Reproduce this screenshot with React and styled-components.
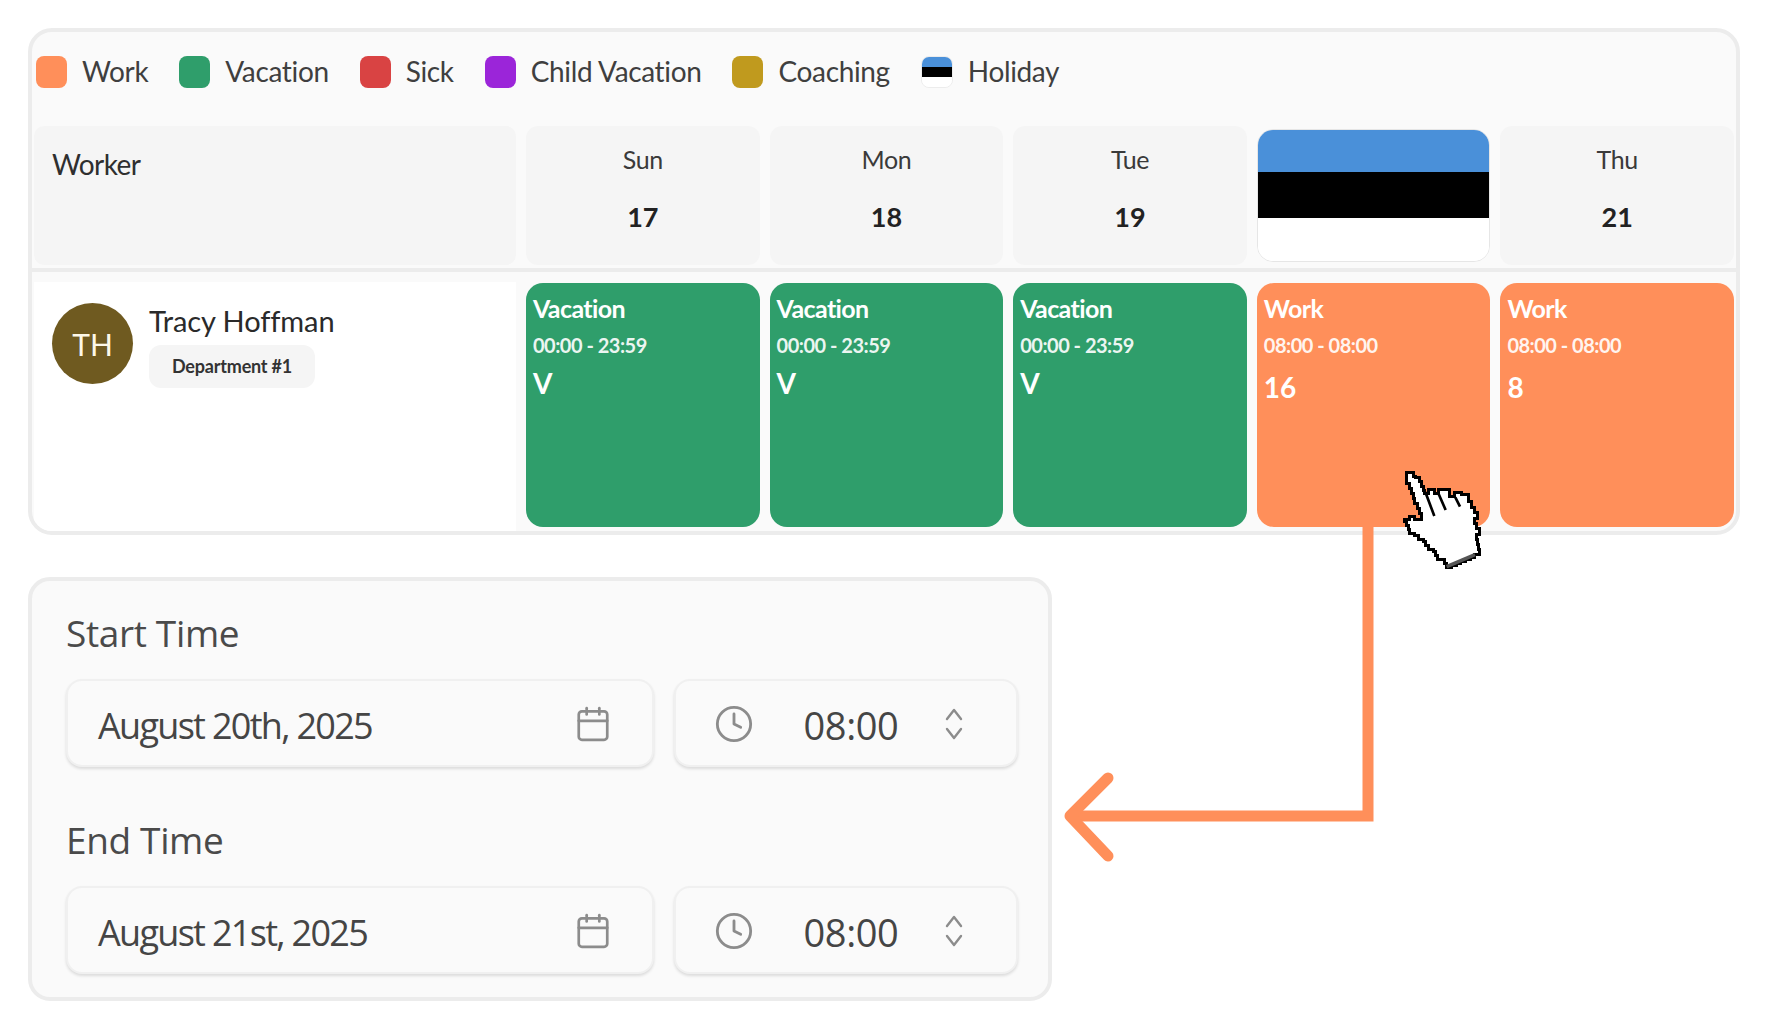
import React from "react";
import styled, { createGlobalStyle } from "styled-components";
import { Calendar, Clock } from "lucide-react";

const GlobalStyle = createGlobalStyle`
  html, body {
    margin: 0;
    padding: 0;
    background: #fff;
  }
  * {
    box-sizing: border-box;
  }
`;

const Page = styled.div`
  position: relative;
  width: 1768px;
  height: 1028px;
  padding: 28px 28px 0 28px;
  overflow: hidden;
  font-family: Lato, "Liberation Sans", sans-serif;
  color: #2f2f2f;
`;

const ScheduleCard = styled.section`
  width: 1712px;
  height: 507px;
  border: 4px solid #ececec;
  border-radius: 24px;
  background: #fafafa;
  overflow: hidden;
`;

const Legend = styled.div`
  display: flex;
  align-items: center;
  height: 32px;
  margin: 24px 0 38px 4px;
`;

const LegendItem = styled.div`
  display: flex;
  align-items: center;
  gap: 15px;
  margin-right: 31px;
  font-size: 28px;
  line-height: 30px;
  letter-spacing: -0.35px;
  color: #3f3f3f;
`;

const LegendLabel = styled.span`
  margin-top: -2px;
`;

const Swatch = styled.span`
  display: block;
  width: 31px;
  height: 32px;
  border-radius: 8px;
  background: ${(p) => p.$color};
`;

const FlagSwatch = styled.span`
  display: flex;
  flex-direction: column;
  width: 32px;
  height: 32px;
  border-radius: 8px;
  border: 1px solid #ececec;
  overflow: hidden;
`;

const Stripe = styled.span`
  display: block;
  flex: ${(p) => p.$flex || 1};
  background: ${(p) => p.$color};
`;

const HeaderGrid = styled.div`
  display: grid;
  grid-template-columns: 482px repeat(5, 1fr);
  column-gap: 10px;
  height: 139px;
  margin: 0 2px;
`;

const WorkerHead = styled.div`
  background: #f5f5f5;
  border-radius: 10px;
  padding: 19px 18px;
  font-size: 28px;
  letter-spacing: -0.6px;
  line-height: 38px;
`;

const DayHead = styled.div`
  display: flex;
  flex-direction: column;
  align-items: center;
  background: #f5f5f5;
  border-radius: 12px;
  padding-top: 16px;
`;

const DayName = styled.div`
  font-size: 25px;
  letter-spacing: -0.4px;
  line-height: 34px;
  color: #3a3a3a;
`;

const DayNumber = styled.div`
  margin-top: 24px;
  font-size: 27px;
  font-weight: 700;
  line-height: 34px;
  color: #222;
`;

const HolidayFlag = styled.div`
  display: flex;
  flex-direction: column;
  margin: 3px 0;
  border: 1px solid #e6e6e6;
  border-radius: 16px;
  overflow: hidden;
  background: #fff;
`;

const Divider = styled.div`
  height: 4px;
  margin-top: 3px;
  background: #ececec;
`;

const WorkerRow = styled.div`
  display: grid;
  grid-template-columns: 482px repeat(5, 1fr);
  column-gap: 10px;
  height: 259px;
  padding: 11px 2px 4px;
`;

const WorkerCell = styled.div`
  display: flex;
  align-items: flex-start;
  gap: 16px;
  margin-top: -1px;
  margin-bottom: -4px;
  padding: 21px 18px;
  background: #fff;
`;

const Avatar = styled.div`
  display: flex;
  align-items: center;
  justify-content: center;
  width: 81px;
  height: 81px;
  border-radius: 50%;
  background: #6f5a20;
  color: #fdf8e8;
  font-size: 30px;
`;

const WorkerInfo = styled.div`
  display: flex;
  flex-direction: column;
  align-items: flex-start;
`;

const WorkerName = styled.div`
  font-size: 29px;
  letter-spacing: -0.1px;
  line-height: 36px;
  color: #2a2a2a;
`;

const DeptBadge = styled.div`
  margin-top: 6px;
  padding: 0 23px;
  height: 43px;
  line-height: 43px;
  border-radius: 12px;
  background: #f5f5f5;
  font-size: 18px;
  font-weight: 700;
  letter-spacing: -0.2px;
  color: #333;
`;

const Shift = styled.div`
  padding: 9px 7px;
  border-radius: 17px;
  background: ${(p) => p.$color};
  color: #fff;
`;

const ShiftTitle = styled.div`
  font-size: 25px;
  font-weight: 700;
  letter-spacing: -0.6px;
  line-height: 32px;
`;

const ShiftTime = styled.div`
  margin-top: 8px;
  font-size: 20px;
  font-weight: 700;
  letter-spacing: -0.5px;
  line-height: 26px;
  color: rgba(255, 255, 255, 0.92);
`;

const ShiftValue = styled.div`
  margin-top: ${(p) => (p.$hours ? 10 : 6)}px;
  font-size: 28px;
  font-weight: 700;
  line-height: 38px;
`;

const FormCard = styled.section`
  width: 1024px;
  height: 424px;
  margin-top: 42px;
  padding: 30px 0 0 34px;
  border: 4px solid #ececec;
  border-radius: 22px;
  background: #fafafa;
  font-family: "Open Sans", "Noto Sans", sans-serif;
`;

const FieldLabel = styled.div`
  height: 44px;
  margin-top: ${(p) => (p.$second ? 51 : 0)}px;
  font-size: 37px;
  letter-spacing: -0.35px;
  line-height: 44px;
  color: #4a4a4a;
`;

const FieldRow = styled.div`
  display: grid;
  grid-template-columns: 588px 344px;
  column-gap: 20px;
  margin-top: 24px;
`;

const InputBox = styled.div`
  display: flex;
  align-items: center;
  justify-content: space-between;
  height: 88px;
  border: 2px solid #f0f0f0;
  border-radius: 16px;
  background: #fafafa;
  box-shadow: 0 2px 3px rgba(0, 0, 0, 0.12);
  padding: ${(p) => p.$padding};
  color: #454545;
  svg {
    color: #8c8c8c;
    flex-shrink: 0;
    margin-top: 2px;
  }
`;

const DateValue = styled.span`
  padding-top: 4px;
  font-size: 36px;
  letter-spacing: -1.7px;
`;

const TimeValue = styled.span`
  margin-left: 6px;
  padding-top: 4px;
  font-size: 38px;
  letter-spacing: -0.4px;
`;

const Overlay = styled.svg`
  position: absolute;
  left: 0;
  top: 0;
  pointer-events: none;
`;

const legendItems = [
  { label: "Work", color: "#ff8f5a" },
  { label: "Vacation", color: "#2f9e6b" },
  { label: "Sick", color: "#d94343" },
  { label: "Child Vacation", color: "#9b25d9" },
  { label: "Coaching", color: "#c09a1e" },
];

const days = [
  { name: "Sun", num: 17 },
  { name: "Mon", num: 18 },
  { name: "Tue", num: 19 },
  { holiday: true },
  { name: "Thu", num: 21 },
];

const shifts = [
  { title: "Vacation", time: "00:00 - 23:59", value: "V", color: "#2f9e6b" },
  { title: "Vacation", time: "00:00 - 23:59", value: "V", color: "#2f9e6b" },
  { title: "Vacation", time: "00:00 - 23:59", value: "V", color: "#2f9e6b" },
  { title: "Work", time: "08:00 - 08:00", value: "16", color: "#ff8f5a", hours: true },
  { title: "Work", time: "08:00 - 08:00", value: "8", color: "#ff8f5a", hours: true },
];

const Flag = ({ as: Wrapper }) => (
  <Wrapper>
    <Stripe $color="#4a90d9" $flex={43} />
    <Stripe $color="#000" $flex={46} />
    <Stripe $color="#fff" $flex={44} />
  </Wrapper>
);

const UpDown = () => (
  <svg width="24" height="36" viewBox="0 0 24 36" fill="none" stroke="currentColor" strokeWidth="2.4" strokeLinecap="round" strokeLinejoin="round">
    <path d="M5 13L12 4L19 13" />
    <path d="M5 23L12 32L19 23" />
  </svg>
);

const DateTimeRow = ({ date }) => (
  <FieldRow>
    <InputBox $padding="0 40px 0 30px">
      <DateValue>{date}</DateValue>
      <Calendar size={38} strokeWidth={1.7} />
    </InputBox>
    <InputBox $padding="0 50px 0 38px">
      <Clock size={40} strokeWidth={1.7} />
      <TimeValue>08:00</TimeValue>
      <UpDown />
    </InputBox>
  </FieldRow>
);

// hand pointer outline, traced from a 3x crop; each edge is cut in little steps
const handPoints = [
  [80, 48], [100, 38], [108, 50], [118, 52], [135, 92], [145, 100], [165, 88], [175, 100],
  [195, 88], [210, 90], [225, 110], [245, 98], [265, 105], [275, 125], [292, 158], [283, 175],
  [298, 205], [290, 225], [298, 270], [285, 285], [200, 322], [185, 300], [172, 298], [160, 275],
  [145, 270], [130, 245], [115, 240], [105, 228], [90, 220], [75, 185], [105, 170], [125, 178],
  [105, 130], [90, 85], [80, 70],
];

const stairs = (points, size) => {
  let d = `M${points[0][0]} ${points[0][1]}`;
  points.forEach((point, i) => {
    const [x0, y0] = point;
    const [x1, y1] = points[(i + 1) % points.length];
    const steps = Math.max(1, Math.round(Math.max(Math.abs(x1 - x0), Math.abs(y1 - y0)) / size));
    for (let s = 1; s <= steps; s++) {
      d += `V${y0 + ((y1 - y0) * s) / steps}H${x0 + ((x1 - x0) * s) / steps}`;
    }
  });
  return d + "Z";
};

const Hand = () => (
  <g transform="translate(1380 460) scale(0.3333)">
    <path d={stairs(handPoints, 14)} fill="#fff" stroke="#000" strokeWidth="9" shapeRendering="crispEdges" />
    <path d="M136 96L163 168M176 102L197 150M226 112L240 140" fill="none" stroke="#000" strokeWidth="8" />
    <path d="M200 320L285 284" fill="none" stroke="#555" strokeWidth="11" />
  </g>
);

export default function App() {
  return (
    <Page>
      <GlobalStyle />
      <ScheduleCard>
        <Legend>
          {legendItems.map((item) => (
            <LegendItem key={item.label}>
              <Swatch $color={item.color} />
              <LegendLabel>{item.label}</LegendLabel>
            </LegendItem>
          ))}
          <LegendItem>
            <Flag as={FlagSwatch} />
            <LegendLabel>Holiday</LegendLabel>
          </LegendItem>
        </Legend>
        <HeaderGrid>
          <WorkerHead>Worker</WorkerHead>
          {days.map((day, i) =>
            day.holiday ? (
              <Flag key={i} as={HolidayFlag} />
            ) : (
              <DayHead key={i}>
                <DayName>{day.name}</DayName>
                <DayNumber>{day.num}</DayNumber>
              </DayHead>
            )
          )}
        </HeaderGrid>
        <Divider />
        <WorkerRow>
          <WorkerCell>
            <Avatar>TH</Avatar>
            <WorkerInfo>
              <WorkerName>Tracy Hoffman</WorkerName>
              <DeptBadge>Department #1</DeptBadge>
            </WorkerInfo>
          </WorkerCell>
          {shifts.map((shift, i) => (
            <Shift key={i} $color={shift.color}>
              <ShiftTitle>{shift.title}</ShiftTitle>
              <ShiftTime>{shift.time}</ShiftTime>
              <ShiftValue $hours={shift.hours}>{shift.value}</ShiftValue>
            </Shift>
          ))}
        </WorkerRow>
      </ScheduleCard>
      <FormCard>
        <FieldLabel>Start Time</FieldLabel>
        <DateTimeRow date="August 20th, 2025" />
        <FieldLabel $second>End Time</FieldLabel>
        <DateTimeRow date="August 21st, 2025" />
      </FormCard>
      <Overlay width="1768" height="1028" viewBox="0 0 1768 1028">
        <path d="M1368 527V816H1072" fill="none" stroke="#ff8f5a" strokeWidth="11" />
        <path d="M1108 778L1070 816L1108 856" fill="none" stroke="#ff8f5a" strokeWidth="11" strokeLinecap="round" strokeLinejoin="round" />
        <Hand />
      </Overlay>
    </Page>
  );
}
